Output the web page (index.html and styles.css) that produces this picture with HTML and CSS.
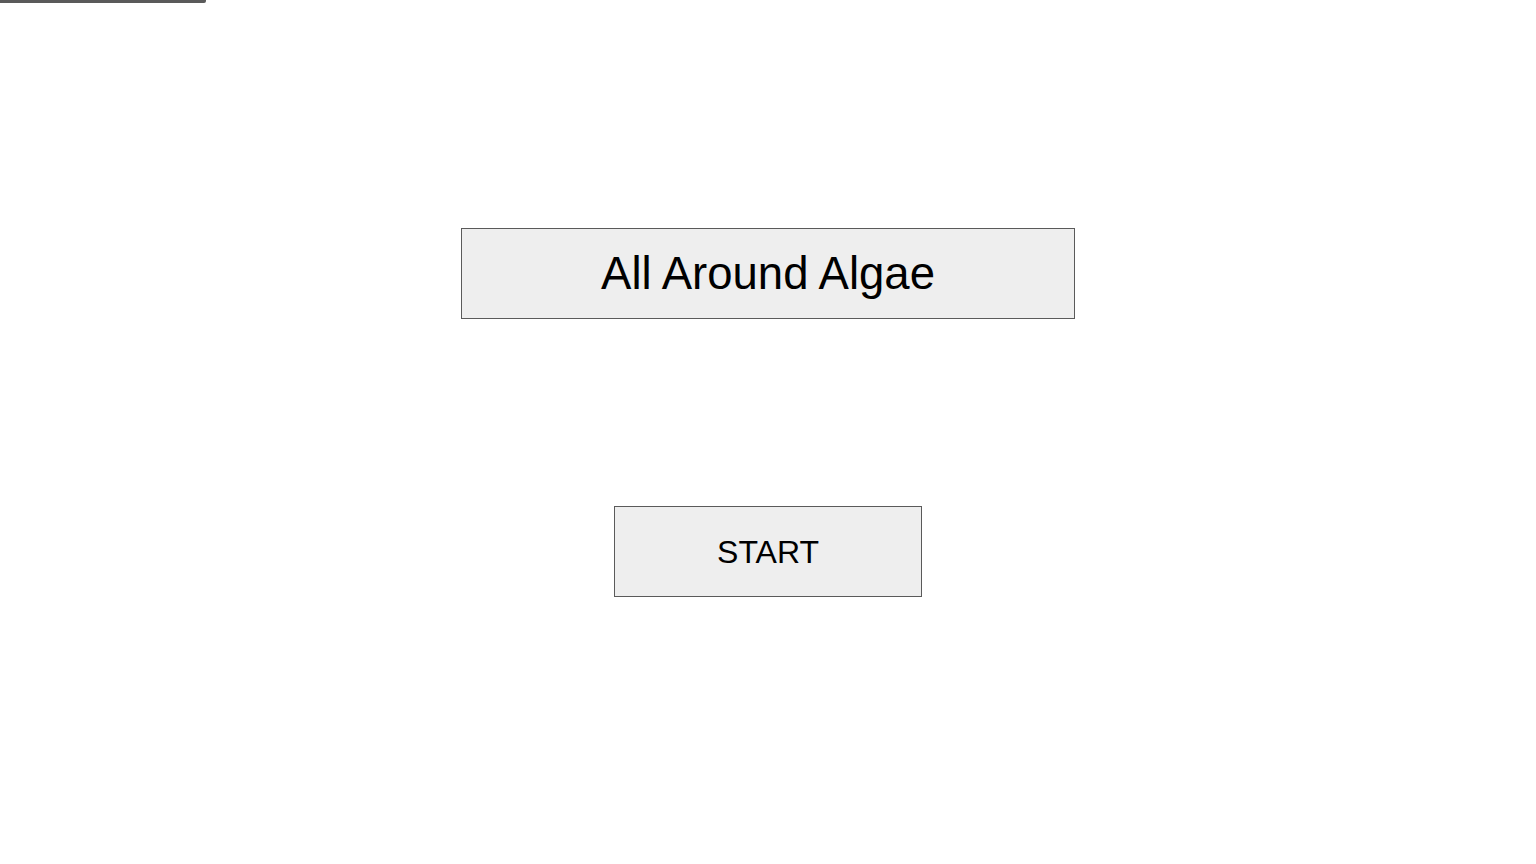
FILE: index.html
```html
<!DOCTYPE html>
<html>
<head>
<meta charset="utf-8">
<link rel="stylesheet" href="styles.css">
</head>
<body>
<div class="topbar"></div>
<main class="screen">
  <div class="title">All Around Algae</div>
  <button class="start">START</button>
</main>
</body>
</html>
```
FILE: styles.css
```css
html, body {
  margin: 0;
  padding: 0;
  background: #fff;
  font-family: "Liberation Sans", Arial, sans-serif;
}
.topbar {
  width: 206px;
  height: 3px;
  background: #5a5a5a;
  border-radius: 0 0 2px 0;
}
.screen {
  display: flex;
  flex-direction: column;
  align-items: center;
  padding-top: 225px;
  gap: 187px;
}
.title {
  box-sizing: border-box;
  width: 614px;
  height: 91px;
  border: 1px solid #5a5a5a;
  background: #eeeeee;
  display: flex;
  align-items: center;
  justify-content: center;
  font-size: 45.5px;
  padding-top: 1px;
  color: #000;
}
.start {
  box-sizing: border-box;
  width: 308px;
  height: 91px;
  border: 1px solid #5a5a5a;
  background: #eeeeee;
  font-family: "Liberation Sans", Arial, sans-serif;
  font-size: 32px;
  color: #000;
  padding: 1px 0 0 0;
  margin: 0;
  display: flex;
  align-items: center;
  justify-content: center;
}
```
